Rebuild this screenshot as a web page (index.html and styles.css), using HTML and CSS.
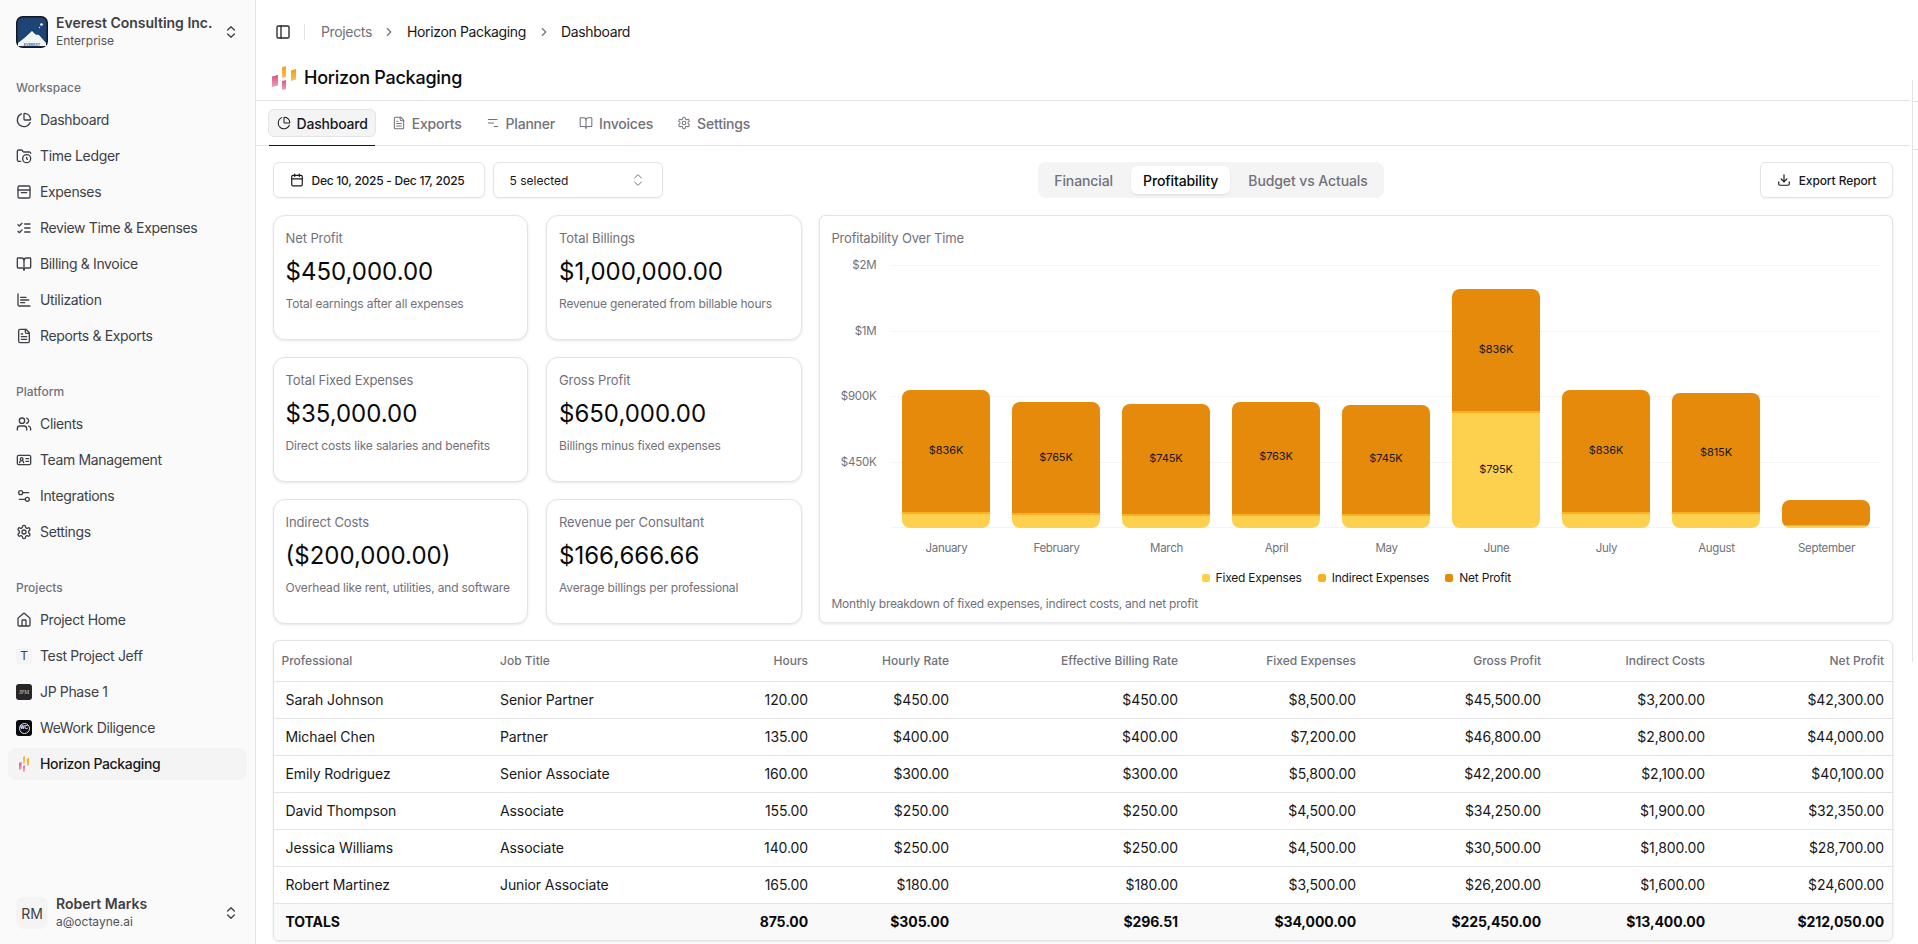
FILE: index.html
```html
<!DOCTYPE html>
<html lang="en">
<head>
<meta charset="utf-8">
<title>Horizon Packaging</title>
<link rel="stylesheet" href="styles.css">
</head>
<body>
<svg class="defs" width="0" height="0" aria-hidden="true">
<defs>
<linearGradient id="g-pink" x1="0" y1="0" x2="0" y2="1"><stop offset="0" stop-color="#d9547f"/><stop offset="1" stop-color="#eda0b8"/></linearGradient>
<linearGradient id="g-orange" x1="0" y1="0" x2="0" y2="1"><stop offset="0" stop-color="#f59e0b"/><stop offset="1" stop-color="#fbc05a"/></linearGradient>
<symbol id="i-pie" viewBox="0 0 24 24"><path d="M21 12c.55 0 1-.45.95-1A10 10 0 0 0 13 2.05c-.55-.05-1 .4-1 .95v8a1 1 0 0 0 1 1z"/><path d="M21.21 15.89A10 10 0 1 1 8 2.83"/></symbol>
<symbol id="i-folderclock" viewBox="0 0 24 24"><circle cx="16" cy="16" r="6"/><path d="M7 20H4a2 2 0 0 1-2-2V5a2 2 0 0 1 2-2h3.9a2 2 0 0 1 1.69.9l.81 1.2a2 2 0 0 0 1.67.9H20a2 2 0 0 1 2 2"/><path d="M16 14v2l1 1"/></symbol>
<symbol id="i-archive" viewBox="0 0 24 24"><rect x="3" y="3" width="18" height="18" rx="2"/><path d="M3 9h18"/><path d="M8 13h8"/></symbol>
<symbol id="i-listchecks" viewBox="0 0 24 24"><path d="m3 17 2 2 4-4"/><path d="m3 7 2 2 4-4"/><path d="M13 6h8"/><path d="M13 12h8"/><path d="M13 18h8"/></symbol>
<symbol id="i-book" viewBox="0 0 24 24"><path d="M12 7v14"/><path d="M3 18a1 1 0 0 1-1-1V4a1 1 0 0 1 1-1h5a4 4 0 0 1 4 4 4 4 0 0 1 4-4h5a1 1 0 0 1 1 1v13a1 1 0 0 1-1 1h-6a3 3 0 0 0-3 3 3 3 0 0 0-3-3z"/></symbol>
<symbol id="i-chart" viewBox="0 0 24 24"><path d="M3 3v16a2 2 0 0 0 2 2h16"/><path d="M7 8h8"/><path d="M7 12h12"/><path d="M7 16h6"/></symbol>
<symbol id="i-file" viewBox="0 0 24 24"><path d="M15 2H6a2 2 0 0 0-2 2v16a2 2 0 0 0 2 2h12a2 2 0 0 0 2-2V7z"/><path d="M14 2v4a2 2 0 0 0 2 2h4"/><path d="M10 9H8"/><path d="M16 13H8"/><path d="M16 17H8"/></symbol>
<symbol id="i-users" viewBox="0 0 24 24"><path d="M16 21v-2a4 4 0 0 0-4-4H6a4 4 0 0 0-4 4v2"/><circle cx="9" cy="7" r="4"/><path d="M22 21v-2a4 4 0 0 0-3-3.87"/><path d="M16 3.13a4 4 0 0 1 0 7.75"/></symbol>
<symbol id="i-idcard" viewBox="0 0 24 24"><rect x="2" y="5" width="20" height="14" rx="2"/><circle cx="8.5" cy="10.5" r="2"/><path d="M5.5 16a3 3 0 0 1 6 0"/><path d="M15 10h4"/><path d="M15 14h4"/></symbol>
<symbol id="i-settings2" viewBox="0 0 24 24"><path d="M14 17H5"/><path d="M19 7h-9"/><circle cx="17" cy="17" r="3"/><circle cx="7" cy="7" r="3"/></symbol>
<symbol id="i-gear" viewBox="0 0 24 24"><path d="M12.22 2h-.44a2 2 0 0 0-2 2v.18a2 2 0 0 1-1 1.73l-.43.25a2 2 0 0 1-2 0l-.15-.08a2 2 0 0 0-2.73.73l-.22.38a2 2 0 0 0 .73 2.73l.15.1a2 2 0 0 1 1 1.72v.51a2 2 0 0 1-1 1.74l-.15.09a2 2 0 0 0-.73 2.73l.22.38a2 2 0 0 0 2.73.73l.15-.08a2 2 0 0 1 2 0l.43.25a2 2 0 0 1 1 1.73V20a2 2 0 0 0 2 2h.44a2 2 0 0 0 2-2v-.18a2 2 0 0 1 1-1.73l.43-.25a2 2 0 0 1 2 0l.15.08a2 2 0 0 0 2.73-.73l.22-.39a2 2 0 0 0-.73-2.73l-.15-.08a2 2 0 0 1-1-1.74v-.5a2 2 0 0 1 1-1.74l.15-.09a2 2 0 0 0 .73-2.73l-.22-.38a2 2 0 0 0-2.73-.73l-.15.08a2 2 0 0 1-2 0l-.43-.25a2 2 0 0 1-1-1.73V4a2 2 0 0 0-2-2z"/><circle cx="12" cy="12" r="3"/></symbol>
<symbol id="i-home" viewBox="0 0 24 24"><path d="M15 21v-8a1 1 0 0 0-1-1h-4a1 1 0 0 0-1 1v8"/><path d="M3 10a2 2 0 0 1 .71-1.53l7-6a2 2 0 0 1 2.58 0l7 6A2 2 0 0 1 21 10v9a2 2 0 0 1-2 2H5a2 2 0 0 1-2-2z"/></symbol>
<symbol id="i-updown" viewBox="0 0 24 24"><path d="m7 15 5 5 5-5"/><path d="m7 9 5-5 5 5"/></symbol>
<symbol id="i-panel" viewBox="0 0 24 24"><rect x="3" y="3" width="18" height="18" rx="2"/><path d="M9 3v18"/></symbol>
<symbol id="i-right" viewBox="0 0 24 24"><path d="m9 18 6-6-6-6"/></symbol>
<symbol id="i-planner" viewBox="0 0 24 24"><path d="M4 6h15"/><path d="M4 12h9"/><path d="M14 18h6"/></symbol>
<symbol id="i-cal" viewBox="0 0 24 24"><path d="M8 2v4"/><path d="M16 2v4"/><rect x="3" y="4" width="18" height="18" rx="2"/><path d="M3 10h18"/></symbol>
<symbol id="i-download" viewBox="0 0 24 24"><path d="M12 15V3"/><path d="M21 15v4a2 2 0 0 1-2 2H5a2 2 0 0 1-2-2v-4"/><path d="m7 10 5 5 5-5"/></symbol>
<symbol id="i-horizon" viewBox="0 0 24 24" preserveAspectRatio="none"><path d="M0 10.5 6 9v10.5L0 21z" fill="url(#g-pink)"/><path d="M10 1.5 14 0v11l-4 1z" fill="url(#g-orange)"/><path d="M10 15l4-1v9l-4 1z" fill="url(#g-pink)"/><path d="M19 4.5 24 3v10.5L19 15z" fill="url(#g-orange)"/></symbol>
</defs>
</svg>
<div class="app">
  <aside class="sidebar">
    <div class="brand">
      <svg class="brand-logo" viewBox="0 0 32 32" role="img" aria-label="Everest"><rect x="0.75" y="0.75" width="30.5" height="30.5" rx="6" fill="#1c4474" stroke="#15171c" stroke-width="1.5"/><path d="M2 27 9 21.5 16 15l3.5 3.5L23 19l7 8v3H2z" fill="#f1f4f7"/><circle cx="25.5" cy="8.5" r="1.3" fill="#fff"/><circle cx="23.5" cy="11.5" r=".7" fill="#dfe8f2"/><text class="logo-word" x="16" y="29.5" text-anchor="middle">EVEREST</text></svg>
      <div class="two-line">
        <span class="strong">Everest Consulting Inc.</span>
        <span class="small">Enterprise</span>
      </div>
      <svg class="ic updown"><use href="#i-updown"/></svg>
    </div>

    <nav class="group first">
      <div class="group-label">Workspace</div>
      <a class="item"><svg class="ic"><use href="#i-pie"/></svg>Dashboard</a>
      <a class="item"><svg class="ic"><use href="#i-folderclock"/></svg>Time Ledger</a>
      <a class="item"><svg class="ic"><use href="#i-archive"/></svg>Expenses</a>
      <a class="item"><svg class="ic"><use href="#i-listchecks"/></svg>Review Time &amp; Expenses</a>
      <a class="item"><svg class="ic"><use href="#i-book"/></svg>Billing &amp; Invoice</a>
      <a class="item"><svg class="ic"><use href="#i-chart"/></svg>Utilization</a>
      <a class="item"><svg class="ic"><use href="#i-file"/></svg>Reports &amp; Exports</a>
    </nav>

    <nav class="group">
      <div class="group-label">Platform</div>
      <a class="item"><svg class="ic"><use href="#i-users"/></svg>Clients</a>
      <a class="item"><svg class="ic"><use href="#i-idcard"/></svg>Team Management</a>
      <a class="item"><svg class="ic"><use href="#i-settings2"/></svg>Integrations</a>
      <a class="item"><svg class="ic"><use href="#i-gear"/></svg>Settings</a>
    </nav>

    <nav class="group">
      <div class="group-label">Projects</div>
      <a class="item"><svg class="ic"><use href="#i-home"/></svg>Project Home</a>
      <a class="item"><span class="proj proj-t">T</span>Test Project Jeff</a>
      <a class="item"><span class="proj proj-j">JPM</span>JP Phase 1</a>
      <a class="item"><span class="proj proj-w"><span class="wc">WC</span></span>WeWork Diligence</a>
      <a class="item active"><svg class="proj-svg"><use href="#i-horizon"/></svg>Horizon Packaging</a>
    </nav>

    <div class="user">
      <div class="avatar">RM</div>
      <div class="two-line">
        <span class="strong">Robert Marks</span>
        <span class="small">a@octayne.ai</span>
      </div>
      <svg class="ic updown"><use href="#i-updown"/></svg>
    </div>
  </aside>

  <main class="main">
    <header class="topbar">
      <svg class="ic panel"><use href="#i-panel"/></svg>
      <span class="vsep"></span>
      <span class="crumb muted">Projects</span>
      <svg class="ic crumb-chev"><use href="#i-right"/></svg>
      <span class="crumb">Horizon Packaging</span>
      <svg class="ic crumb-chev"><use href="#i-right"/></svg>
      <span class="crumb">Dashboard</span>
    </header>

    <div class="titlebar">
      <svg class="title-logo"><use href="#i-horizon"/></svg>
      <h1>Horizon Packaging</h1>
    </div>

    <div class="tabs">
      <a class="tab active"><svg class="ic"><use href="#i-pie"/></svg>Dashboard</a>
      <a class="tab"><svg class="ic"><use href="#i-file"/></svg>Exports</a>
      <a class="tab"><svg class="ic"><use href="#i-planner"/></svg>Planner</a>
      <a class="tab"><svg class="ic"><use href="#i-book"/></svg>Invoices</a>
      <a class="tab"><svg class="ic"><use href="#i-gear"/></svg>Settings</a>
    </div>

    <section class="content">
      <div class="filters">
        <div class="filters-left">
          <button class="btn date"><svg class="ic"><use href="#i-cal"/></svg>Dec 10, 2025 - Dec 17, 2025</button>
          <button class="btn select">5 selected<svg class="ic"><use href="#i-updown"/></svg></button>
        </div>
        <div class="segment">
          <span class="seg">Financial</span>
          <span class="seg active">Profitability</span>
          <span class="seg">Budget vs Actuals</span>
        </div>
        <button class="btn export"><svg class="ic"><use href="#i-download"/></svg>Export Report</button>
      </div>

      <div class="overview">
        <div class="kpis">
          <article class="kpi"><div class="kpi-t">Net Profit</div><div class="kpi-v">$450,000.00</div><div class="kpi-d">Total earnings after all expenses</div></article>
          <article class="kpi"><div class="kpi-t">Total Billings</div><div class="kpi-v">$1,000,000.00</div><div class="kpi-d">Revenue generated from billable hours</div></article>
          <article class="kpi"><div class="kpi-t">Total Fixed Expenses</div><div class="kpi-v">$35,000.00</div><div class="kpi-d">Direct costs like salaries and benefits</div></article>
          <article class="kpi"><div class="kpi-t">Gross Profit</div><div class="kpi-v">$650,000.00</div><div class="kpi-d">Billings minus fixed expenses</div></article>
          <article class="kpi"><div class="kpi-t">Indirect Costs</div><div class="kpi-v">($200,000.00)</div><div class="kpi-d">Overhead like rent, utilities, and software</div></article>
          <article class="kpi"><div class="kpi-t">Revenue per Consultant</div><div class="kpi-v">$166,666.66</div><div class="kpi-d">Average billings per professional</div></article>
        </div>

        <article class="chart-card">
          <div class="chart-title">Profitability Over Time</div>
          <div class="plot">
            <div class="axis">
              <span>$2M</span><span>$1M</span><span>$900K</span><span>$450K</span>
            </div>
            <div class="grid-area">
              <div class="gridlines"><i></i><i></i><i></i><i></i><i></i></div>
              <div class="bars">
                <div class="bar-col"><div class="bar">
                  <div class="seg-net" style="height:122px"><span style="top:60px">$836K</span></div>
                  <div class="seg-ind" style="height:2px"></div>
                  <div class="seg-fix" style="height:14px"></div>
                </div></div>
                <div class="bar-col"><div class="bar">
                  <div class="seg-net" style="height:111px"><span style="top:55px">$765K</span></div>
                  <div class="seg-ind" style="height:2px"></div>
                  <div class="seg-fix" style="height:13px"></div>
                </div></div>
                <div class="bar-col"><div class="bar">
                  <div class="seg-net" style="height:110px"><span style="top:54px">$745K</span></div>
                  <div class="seg-ind" style="height:2px"></div>
                  <div class="seg-fix" style="height:12px"></div>
                </div></div>
                <div class="bar-col"><div class="bar">
                  <div class="seg-net" style="height:112px"><span style="top:54px">$763K</span></div>
                  <div class="seg-ind" style="height:2px"></div>
                  <div class="seg-fix" style="height:12px"></div>
                </div></div>
                <div class="bar-col"><div class="bar">
                  <div class="seg-net" style="height:109px"><span style="top:53px">$745K</span></div>
                  <div class="seg-ind" style="height:2px"></div>
                  <div class="seg-fix" style="height:12px"></div>
                </div></div>
                <div class="bar-col"><div class="bar">
                  <div class="seg-net" style="height:122px"><span style="top:60px">$836K</span></div>
                  <div class="seg-ind" style="height:2px"></div>
                  <div class="seg-fix" style="height:115px"><span style="top:56px">$795K</span></div>
                </div></div>
                <div class="bar-col"><div class="bar">
                  <div class="seg-net" style="height:122px"><span style="top:60px">$836K</span></div>
                  <div class="seg-ind" style="height:2px"></div>
                  <div class="seg-fix" style="height:14px"></div>
                </div></div>
                <div class="bar-col"><div class="bar">
                  <div class="seg-net" style="height:119px"><span style="top:59px">$815K</span></div>
                  <div class="seg-ind" style="height:2px"></div>
                  <div class="seg-fix" style="height:14px"></div>
                </div></div>
                <div class="bar-col"><div class="bar">
                  <div class="seg-net" style="height:25px"></div>
                  <div class="seg-ind" style="height:1px"></div>
                  <div class="seg-fix" style="height:2px"></div>
                </div></div>
              </div>
            </div>
          </div>
          <div class="months">
            <span>January</span><span>February</span><span>March</span><span>April</span><span>May</span><span>June</span><span>July</span><span>August</span><span>September</span>
          </div>
          <div class="legend">
            <span class="lg"><i class="sw fix"></i>Fixed Expenses</span>
            <span class="lg"><i class="sw ind"></i>Indirect Expenses</span>
            <span class="lg"><i class="sw net"></i>Net Profit</span>
          </div>
          <div class="chart-desc">Monthly breakdown of fixed expenses, indirect costs, and net profit</div>
        </article>
      </div>

      <div class="table-card">
        <table>
          <colgroup>
            <col class="c1"><col class="c2"><col class="c3"><col class="c4"><col class="c5"><col class="c6"><col class="c7"><col class="c8"><col class="c9">
          </colgroup>
          <thead>
            <tr><th>Professional</th><th>Job Title</th><th class="r">Hours</th><th class="r">Hourly Rate</th><th class="r">Effective Billing Rate</th><th class="r">Fixed Expenses</th><th class="r">Gross Profit</th><th class="r">Indirect Costs</th><th class="r">Net Profit</th></tr>
          </thead>
          <tbody>
            <tr><td>Sarah Johnson</td><td>Senior Partner</td><td class="r">120.00</td><td class="r">$450.00</td><td class="r">$450.00</td><td class="r">$8,500.00</td><td class="r">$45,500.00</td><td class="r">$3,200.00</td><td class="r">$42,300.00</td></tr>
            <tr><td>Michael Chen</td><td>Partner</td><td class="r">135.00</td><td class="r">$400.00</td><td class="r">$400.00</td><td class="r">$7,200.00</td><td class="r">$46,800.00</td><td class="r">$2,800.00</td><td class="r">$44,000.00</td></tr>
            <tr><td>Emily Rodriguez</td><td>Senior Associate</td><td class="r">160.00</td><td class="r">$300.00</td><td class="r">$300.00</td><td class="r">$5,800.00</td><td class="r">$42,200.00</td><td class="r">$2,100.00</td><td class="r">$40,100.00</td></tr>
            <tr><td>David Thompson</td><td>Associate</td><td class="r">155.00</td><td class="r">$250.00</td><td class="r">$250.00</td><td class="r">$4,500.00</td><td class="r">$34,250.00</td><td class="r">$1,900.00</td><td class="r">$32,350.00</td></tr>
            <tr><td>Jessica Williams</td><td>Associate</td><td class="r">140.00</td><td class="r">$250.00</td><td class="r">$250.00</td><td class="r">$4,500.00</td><td class="r">$30,500.00</td><td class="r">$1,800.00</td><td class="r">$28,700.00</td></tr>
            <tr><td>Robert Martinez</td><td>Junior Associate</td><td class="r">165.00</td><td class="r">$180.00</td><td class="r">$180.00</td><td class="r">$3,500.00</td><td class="r">$26,200.00</td><td class="r">$1,600.00</td><td class="r">$24,600.00</td></tr>
          </tbody>
          <tfoot>
            <tr><td>TOTALS</td><td></td><td class="r">875.00</td><td class="r">$305.00</td><td class="r">$296.51</td><td class="r">$34,000.00</td><td class="r">$225,450.00</td><td class="r">$13,400.00</td><td class="r">$212,050.00</td></tr>
          </tfoot>
        </table>
      </div>
    </section>
  </main>
</div>
</body>
</html>
```

FILE: styles.css
```css
* { box-sizing: border-box; }
html, body { height: 100%; }
body {
  margin: 0;
  font-family: Inter, "Liberation Sans", sans-serif;
  font-size: 14px;
  color: #09090b;
  background: #fff;
  overflow: hidden;
}
.defs { position: absolute; }
.ic {
  width: 16px;
  height: 16px;
  flex: none;
  fill: none;
  stroke: currentColor;
  stroke-width: 2;
  stroke-linecap: round;
  stroke-linejoin: round;
}
.app { display: flex; height: 944px; }

/* Sidebar */
.sidebar {
  width: 256px;
  flex: none;
  background: #fafafa;
  border-right: 1px solid #e4e4e7;
  display: flex;
  flex-direction: column;
  color: #3f3f46;
}
.brand { display: flex; align-items: center; gap: 8px; padding: 16px 16px; height: 64px; }
.brand-logo { width: 32px; height: 32px; flex: none; }
.logo-word { font-size: 3.6px; font-weight: 700; fill: #4a6b96; }
.two-line { display: flex; flex-direction: column; flex: 1; min-width: 0; line-height: 18px; }
.strong { font-weight: 600; font-size: 14px; white-space: nowrap; }
.small { font-size: 12px; color: #52525b; }
.updown { color: #3f3f46; }
.group { padding: 0 8px; margin-top: 20px; display: flex; flex-direction: column; }
.group.first { margin-top: 8px; }
.group-label { height: 32px; padding: 0 8px; display: flex; align-items: center; font-size: 12px; color: #71717a; font-weight: 500; line-height: 16px; }
.item {
  height: 32px;
  margin-bottom: 4px;
  padding: 0 8px;
  display: flex;
  align-items: center;
  gap: 8px;
  border-radius: 8px;
  font-size: 14px;
  letter-spacing: -0.35px;
  line-height: 20px;
  white-space: nowrap;
}
.item.active { background: #f4f4f5; color: #18181b; font-weight: 500; }
.proj { width: 16px; height: 16px; flex: none; border-radius: 3px; display: flex; align-items: center; justify-content: center; letter-spacing: 0; }
.proj-t { background: #f4f4f5; font-size: 12px; color: #3f3f46; }
.proj-j { background: #27272a; color: #d4d4d8; font-family: "Liberation Serif", serif; font-size: 5.5px; }
.proj-w { background: #09090b; }
.wc { width: 11px; height: 11px; border: 1px solid #e4e4e7; border-radius: 50%; color: #fff; font-size: 4.5px; font-weight: 700; display: flex; align-items: center; justify-content: center; }
.proj-svg { width: 10px; height: 16px; flex: none; margin: 0 3px; }
.user { margin-top: auto; display: flex; align-items: center; gap: 8px; padding: 0 16px 13px; }
.avatar { width: 32px; height: 32px; flex: none; background: #f4f4f5; border-radius: 8px; display: flex; align-items: center; justify-content: center; font-size: 14px; color: #3f3f46; }

/* Main */
.main { width: 1657px; flex: none; display: flex; flex-direction: column; position: relative; }
.main::after { content: ""; position: absolute; right: 0; top: 80px; height: 582px; width: 1px; background: #e4e4e7; }
.main::before { content: ""; position: absolute; left: 100%; top: 101px; height: 47px; width: 5px; border-top: 1px solid #e4e4e7; border-bottom: 1px solid #e4e4e7; }
.topbar { height: 64px; display: flex; align-items: center; padding: 0 0 0 18.5px; flex: none; }
.panel { color: #27272a; }
.vsep { width: 1px; height: 16px; background: #e4e4e7; margin: 0 16px 0 13.5px; }
.crumb { font-size: 14px; line-height: 20px; color: #18181b; letter-spacing: -0.35px; }
.crumb.muted { color: #71717a; }
.crumb-chev { width: 14px; height: 14px; margin: 0 10.5px; color: #71717a; }
.titlebar { height: 37px; display: flex; align-items: flex-start; padding: 2px 0 0 16px; gap: 8px; border-bottom: 1px solid #e4e4e7; flex: none; margin-right: 3px; }
.title-logo { width: 24px; height: 24px; flex: none; }
h1 { margin: 0; font-size: 18px; font-weight: 500; line-height: 24px; color: #09090b; letter-spacing: -0.25px; }
.tabs { height: 45px; flex: none; display: flex; align-items: flex-start; padding: 8px 0 0 12px; gap: 7px; border-bottom: 1px solid #e4e4e7; color: #71717a; margin-right: 3px; }
.tab {
  height: 28px;
  display: flex;
  align-items: center;
  gap: 6px;
  padding: 0 7.5px;
  border: 1px solid transparent;
  border-radius: 6px;
  font-size: 14px;
  font-weight: 500;
  letter-spacing: -0.2px;
  position: relative;
}
.tab .ic { width: 14px; height: 14px; stroke-width: 1.75; }
.tab.active { background: #f4f4f5; border-color: #e4e4e7; color: #18181b; }
.tab.active::after { content: ""; position: absolute; left: 0; right: 0; bottom: -10px; height: 1px; background: #18181b; }

.content { padding: 16px 20px 0 16.5px; display: flex; flex-direction: column; flex: 1; min-height: 0; }
.filters { display: flex; align-items: center; justify-content: space-between; height: 36px; }
.filters-left { display: flex; gap: 8px; }
.btn {
  font: inherit;
  font-size: 12px;
  font-weight: 500;
  color: #18181b;
  height: 36px;
  background: #fff;
  border: 1px solid #e4e4e7;
  border-radius: 6px;
  box-shadow: 0 1px 2px rgba(0,0,0,.05);
  display: flex;
  align-items: center;
  white-space: nowrap;
}
.date { width: 212px; padding: 0 16px; gap: 8px; letter-spacing: -0.25px; }
.date .ic, .export .ic { width: 14px; height: 14px; }
.select { width: 170px; padding: 0 16px; justify-content: space-between; font-weight: 400; }
.select .ic { width: 16px; height: 16px; color: #71717a; stroke-width: 1.5; }
.segment {
  display: flex;
  align-items: center;
  gap: 6px;
  height: 36px;
  width: 346px;
  padding: 4px;
  background: #f4f4f5;
  border-radius: 8px;
  color: #71717a;
  font-size: 14px;
  font-weight: 500;
  letter-spacing: -0.1px;
}
.seg { padding: 0 12px; height: 28px; display: flex; align-items: center; white-space: nowrap; }
.seg.active { background: #fff; color: #09090b; border-radius: 6px; box-shadow: 0 1px 2px rgba(0,0,0,.1); }
.export { width: 133px; justify-content: center; gap: 8px; letter-spacing: -0.1px; }

.overview { display: flex; gap: 17px; margin-top: 17px; height: 408px; }
.kpis { width: 529px; flex: none; display: grid; grid-template-columns: 1fr 1fr; grid-template-rows: repeat(3, 125px); gap: 17px 18px; }
.kpi {
  background: #fff;
  border: 1px solid #e4e4e7;
  border-radius: 12px;
  box-shadow: 0 1px 3px rgba(0,0,0,.1);
  padding: 12px;
}
.kpi-t { font-size: 13px; line-height: 20px; color: #71717a; letter-spacing: -0.1px; }
.kpi-v { font-size: 24px; line-height: 32px; margin-top: 8px; color: #09090b; }
.kpi-d { font-size: 12px; line-height: 16px; color: #71717a; margin-top: 8px; letter-spacing: -0.17px; white-space: nowrap; }

.chart-card {
  flex: 1;
  min-width: 0;
  background: #fff;
  border: 1px solid #e4e4e7;
  border-radius: 6px;
  box-shadow: 0 1px 3px rgba(0,0,0,.1);
  padding: 12px 11px 0 12px;
  display: flex;
  flex-direction: column;
}
.chart-title { font-size: 13px; line-height: 20px; color: #71717a; letter-spacing: -0.2px; }
.plot { display: flex; height: 271px; margin-top: 9px; margin-left: -1px; flex: none; }
.axis { width: 61px; flex: none; padding-right: 15px; display: flex; flex-direction: column; font-size: 11.5px; color: #71717a; text-align: right; letter-spacing: -0.2px; }
.axis span { height: 65.5px; line-height: 16px; flex: none; }
.grid-area { flex: 1; position: relative; }
.gridlines { position: absolute; left: 0; right: 0; top: 8px; display: flex; flex-direction: column; justify-content: space-between; height: 263px; }
.gridlines i { display: block; height: 1px; background: #f4f4f5; }
.bars { position: absolute; left: 10.5px; right: 0; top: 0; height: 270.5px; display: grid; grid-template-columns: repeat(9, 88px); column-gap: 22px; }
.bar-col { display: flex; align-items: flex-end; }
.bar { width: 88px; border-radius: 8px; overflow: hidden; display: flex; flex-direction: column; }
.seg-net, .seg-fix { position: relative; }
.seg-net { background: #e58a0b; }
.seg-ind { background: #fbb024; }
.seg-fix { background: #fdd14d; }
.seg-net span, .seg-fix span { position: absolute; left: 0; right: 0; text-align: center; font-size: 11px; line-height: 16px; color: #18181b; transform: translateY(-8px); letter-spacing: -0.1px; }
.months { display: grid; grid-template-columns: repeat(9, 110px); margin: 12px 0 0 60px; font-size: 11.5px; line-height: 16px; color: #71717a; text-align: center; letter-spacing: -0.3px; }
.legend { display: flex; justify-content: center; gap: 16px; font-size: 12px; line-height: 16px; margin: 14px 0 0; color: #18181b; letter-spacing: -0.2px; }
.lg { display: flex; align-items: center; gap: 6px; }
.sw { width: 8px; height: 8px; border-radius: 2px; display: block; }
.sw.fix { background: #fdd14d; }
.sw.ind { background: #fbb024; }
.sw.net { background: #e58a0b; }
.chart-desc { font-size: 12px; line-height: 16px; color: #71717a; margin-top: 10px; letter-spacing: -0.24px; }

.table-card {
  margin-top: 17px;
  border: 1px solid #e4e4e7;
  border-radius: 6px;
  box-shadow: 0 1px 3px rgba(0,0,0,.1);
  overflow: hidden;
  background: #fff;
}
table { border-collapse: collapse; width: 100%; table-layout: fixed; font-size: 14px; }
.c1 { width: 218.5px; } .c2 { width: 220px; } .c3 { width: 104px; } .c4 { width: 141px; }
.c5 { width: 229px; } .c6 { width: 178px; } .c7 { width: 185px; } .c8 { width: 164px; } .c9 { width: auto; }
th { height: 40px; padding: 0 8px; text-align: left; font-size: 12px; font-weight: 500; color: #71717a; border-bottom: 1px solid #e4e4e7; }
td { height: 37px; padding: 0 8px; color: #18181b; border-bottom: 1px solid #e4e4e7; white-space: nowrap; letter-spacing: -0.1px; }
td:first-child { padding-left: 12px; }
th.r, td.r { text-align: right; }
tfoot td { background: #f9f9f9; font-weight: 700; color: #09090b; border-bottom: 0; }
```
